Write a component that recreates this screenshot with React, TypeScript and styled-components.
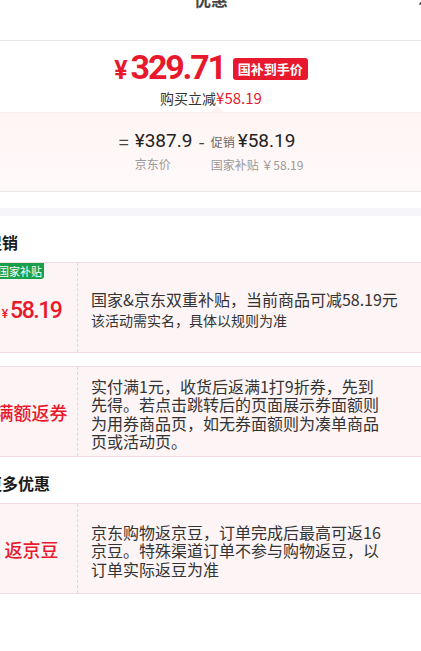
import styled, { createGlobalStyle } from "styled-components";

const RED = "#e8192c";

const GlobalStyle = createGlobalStyle`
  html, body {
    margin: 0;
    padding: 0;
    background: #fff;
    overflow: hidden;
  }
  body {
    font-family: "Noto Sans CJK SC", "Noto Sans", sans-serif;
    color: #333;
  }
`;

type Promo = {
  tag?: string;
  label?: string;
  amount?: string;
  title?: string;
  lines: string;
};

const promos: Promo[] = [
  {
    tag: "国家补贴",
    amount: "58.19",
    title: "国家&京东双重补贴，当前商品可减58.19元",
    lines: "该活动需实名，具体以规则为准",
  },
  {
    label: "满额返券",
    lines:
      "实付满1元，收货后返满1打9折券，先到先得。若点击跳转后的页面展示券面额则为用券商品页，如无券面额则为凑单商品页或活动页。",
  },
];

const more: Promo[] = [
  {
    label: "返京豆",
    lines: "京东购物返京豆，订单完成后最高可返16京豆。特殊渠道订单不参与购物返豆，以订单实际返豆为准",
  },
];

const PromoCard = ({ tag, label, amount, title, lines }: Promo) => (
  <Card>
    {tag && <GreenTag>{tag}</GreenTag>}
    <LeftCol>
      {amount ? (
        <Amount>
          <small>¥</small>
          {amount}
        </Amount>
      ) : (
        <PromoName>{label}</PromoName>
      )}
    </LeftCol>
    <RightCol>
      {title && <CardTitle>{title}</CardTitle>}
      <CardText $small={!!title}>{lines}</CardText>
    </RightCol>
  </Card>
);

export default function App() {
  return (
    <>
      <GlobalStyle />
      <Sheet>
        <Header>
          <Title>优惠</Title>
          <Close viewBox="0 0 16 16">
            <path d="M2 2 L14 14 M14 2 L2 14" stroke="#333" strokeWidth="1.6" strokeLinecap="round" />
          </Close>
        </Header>

        <PriceBlock>
          <PriceRow>
            <BigPrice>
              <span>¥</span>329.71
            </BigPrice>
            <Badge>国补到手价</Badge>
          </PriceRow>
          <SubLine>
            购买立减<RedText>¥58.19</RedText>
          </SubLine>
        </PriceBlock>

        <Breakdown>
          <Op>=</Op>
          <Col>
            <Value>¥387.9</Value>
            <Label>京东价</Label>
          </Col>
          <Op>-</Op>
          <Col>
            <Value>
              <em>促销</em>¥58.19
            </Value>
            <Label>国家补贴 ￥58.19</Label>
          </Col>
        </Breakdown>

        <Strip />

        <Section>
          <Heading>促销</Heading>
          <CardList>
            {promos.map((p, i) => (
              <PromoCard key={i} {...p} />
            ))}
          </CardList>
        </Section>

        <Section>
          <Heading>更多优惠</Heading>
          <CardList>
            {more.map((p, i) => (
              <PromoCard key={i} {...p} />
            ))}
          </CardList>
        </Section>
      </Sheet>
    </>
  );
}

const Sheet = styled.div`
  margin-left: -26px;
  width: 474px;
  position: relative;
`;

const Header = styled.div`
  height: 40px;
  border-bottom: 1px solid #e6e6e6;
  display: flex;
  justify-content: center;
  align-items: flex-start;
  position: relative;
`;

const Title = styled.div`
  font-size: 17px;
  font-weight: 700;
  line-height: 20px;
  margin-top: -11px;
  color: #444;
`;

const Close = styled.svg`
  position: absolute;
  right: 14px;
  top: -10px;
  width: 16px;
  height: 16px;
`;

const PriceBlock = styled.div`
  padding-top: 10px;
  display: flex;
  flex-direction: column;
  align-items: center;
`;

const PriceRow = styled.div`
  display: flex;
  align-items: center;
  height: 36px;
`;

const BigPrice = styled.div`
  font-family: Roboto, "Noto Sans", sans-serif;
  font-weight: 700;
  font-size: 34px;
  letter-spacing: -2.2px;
  line-height: 36px;
  color: ${RED};

  span {
    font-size: 25px;
    letter-spacing: 0;
    margin-right: 3px;
  }
`;

const Badge = styled.div`
  margin-left: 8px;
  background: ${RED};
  color: #fff;
  font-size: 13px;
  font-weight: 700;
  height: 22px;
  line-height: 22px;
  padding: 0 5px;
  border-radius: 3px;
`;

const SubLine = styled.div`
  margin-top: 1px;
  font-size: 14px;
  line-height: 20px;
  color: #333;
`;

const RedText = styled.span`
  color: ${RED};
  font-size: 15px;
`;

const Breakdown = styled.div`
  position: relative;
  margin: 4px 12px 0;
  padding: 16px 0 17px;
  background: linear-gradient(180deg, #fff4f4 0%, #fffafa 100%);
  border-top: 1px solid #fbeeee;
  border-bottom: 1px solid #ebe5e5;
  display: flex;
  justify-content: center;
  align-items: flex-start;
  gap: 6px;

  &::before {
    content: "";
    position: absolute;
    left: 225px;
    top: -8px;
    border-left: 6px solid transparent;
    border-right: 6px solid transparent;
    border-bottom: 7px solid #fdf0f0;
  }
`;

const Op = styled.div`
  font-size: 18px;
  line-height: 24px;
  color: #444;
`;

const Col = styled.div`
  display: flex;
  flex-direction: column;
  gap: 2px;
`;

const Value = styled.div`
  font-family: Roboto, "Noto Sans CJK SC", sans-serif;
  font-size: 19px;
  font-weight: 400;
  line-height: 24px;
  color: #222;

  em {
    font-style: normal;
    font-family: "Noto Sans CJK SC", sans-serif;
    font-size: 12px;
    font-weight: 400;
    color: #666;
    margin-right: 3px;
  }
`;

const Label = styled.div`
  font-size: 12px;
  line-height: 18px;
  color: #999;
`;

const Strip = styled.div`
  margin-top: 16px;
  height: 8px;
  background: #f6f6fa;
`;

const Section = styled.div`
  padding: 0 12px;
`;

const Heading = styled.div`
  margin-top: 15px;
  font-size: 16px;
  font-weight: 700;
  line-height: 22px;
  color: #1a1a1a;
`;

const CardList = styled.div`
  margin-top: 9px;
  display: flex;
  flex-direction: column;
  gap: 13px;
`;

const Card = styled.div`
  position: relative;
  display: flex;
  min-height: 89px;
  background: #fdf4f5;
  border-top: 1px solid #f2dde1;
  border-bottom: 1px solid #f2dde1;
`;

const GreenTag = styled.div`
  position: absolute;
  left: 0;
  top: 0;
  height: 16px;
  line-height: 16px;
  padding: 0 2px 0 12px;
  font-size: 11px;
  color: #fff;
  background: #1a9f4a;
  border-bottom-right-radius: 3px;
`;

const LeftCol = styled.div`
  width: 91px;
  flex: none;
  border-right: 1px dashed #ecd2d8;
  display: flex;
  align-items: center;
  justify-content: center;
`;

const Amount = styled.div`
  font-family: Roboto, "Noto Sans", sans-serif;
  font-weight: 500;
  font-size: 23px;
  letter-spacing: -1.5px;
  color: ${RED};
  margin-top: 6px;

  small {
    font-size: 12px;
    letter-spacing: 0;
    margin-right: 2px;
  }
`;

const PromoName = styled.div`
  font-size: 18px;
  font-weight: 500;
  color: ${RED};
  white-space: nowrap;
`;

const RightCol = styled.div`
  flex: 1;
  padding: 4px 14px 0 13px;
  display: flex;
  flex-direction: column;
  justify-content: center;
`;

const CardTitle = styled.div`
  font-size: 16px;
  line-height: 21px;
  white-space: nowrap;
  color: #333;
`;

const CardText = styled.div<{ $small: boolean }>`
  max-width: 292px;
  font-size: ${({ $small }) => ($small ? "14px" : "16px")};
  line-height: ${({ $small }) => ($small ? "20px" : "18.5px")};
  color: #333;
`;
